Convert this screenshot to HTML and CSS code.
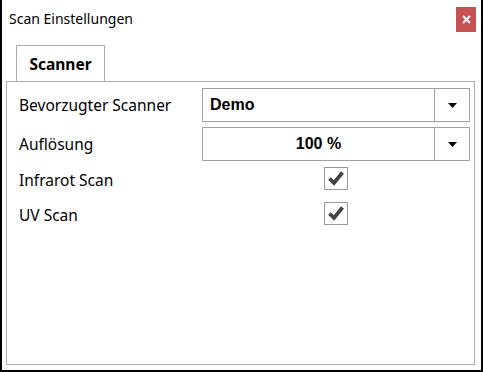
FILE: index.html
```html
<!DOCTYPE html>
<html lang="de">
<head>
    <meta charset="UTF-8">
    <title>Scan Einstellungen</title>
    <link rel="stylesheet" href="styles.css">
</head>
<body>
    <div class="window">
        <div class="titlebar">
            <span class="title">Scan Einstellungen</span>
            <div class="close-button">
                <svg width="9" height="9" viewBox="0 0 9 9">
                    <path d="M1 1 L8 8 M8 1 L1 8" stroke="#fff" stroke-width="2"/>
                </svg>
            </div>
        </div>

        <div class="tab-control">
            <div class="tab-strip">
                <div class="tab-item selected">Scanner</div>
            </div>
            <div class="tab-panel">
                <div class="setting-row combo-row">
                    <span class="setting-label">Bevorzugter Scanner</span>
                    <div class="combo-box">
                        <span class="combo-value">Demo</span>
                        <span class="combo-arrow">
                            <svg width="9" height="5" viewBox="0 0 9 5"><path d="M0 0 H9 L4.5 5 Z" fill="#000"/></svg>
                        </span>
                    </div>
                </div>
                <div class="setting-row combo-row">
                    <span class="setting-label">Auflösung</span>
                    <div class="combo-box">
                        <span class="combo-value centered">100 %</span>
                        <span class="combo-arrow">
                            <svg width="9" height="5" viewBox="0 0 9 5"><path d="M0 0 H9 L4.5 5 Z" fill="#000"/></svg>
                        </span>
                    </div>
                </div>
                <div class="setting-row check-row">
                    <span class="setting-label">Infrarot Scan</span>
                    <div class="check-cell">
                        <span class="check-box">
                            <svg width="22" height="22" viewBox="0 0 22 22"><path d="M4.5 11.5 L9 16 L17.5 5.5" fill="none" stroke="#444" stroke-width="3.8"/></svg>
                        </span>
                    </div>
                </div>
                <div class="setting-row check-row">
                    <span class="setting-label">UV Scan</span>
                    <div class="check-cell">
                        <span class="check-box">
                            <svg width="22" height="22" viewBox="0 0 22 22"><path d="M4.5 11.5 L9 16 L17.5 5.5" fill="none" stroke="#444" stroke-width="3.8"/></svg>
                        </span>
                    </div>
                </div>
            </div>
        </div>
    </div>
</body>
</html>
```

FILE: styles.css
```css
:root {
    --frame: #000;
    --tab-border: #acacac;
    --control-border: #a0a0a0;
    --close-red: #c75050;
}

body {
    margin: 0;
    font-family: "Noto Sans", "Open Sans", sans-serif;
    color: #000;
    background: #fff;
}

.window {
    box-sizing: border-box;
    width: 483px;
    height: 372px;
    display: flex;
    flex-direction: column;
    border: 2px solid var(--frame);
    border-top: none;
    background: #fff;
}

.titlebar {
    display: flex;
    align-items: center;
    justify-content: space-between;
    height: 25px;
    padding: 7px 5px 0 7px;
}

.title {
    font-size: 14px;
    margin-top: -3px;
}

.close-button {
    width: 20px;
    height: 25px;
    display: flex;
    align-items: center;
    justify-content: center;
    background-color: var(--close-red);
}

.tab-control {
    flex: 1;
    display: flex;
    flex-direction: column;
    margin: 13px 6px 5px 4px;
}

.tab-strip {
    display: flex;
    padding-left: 10px;
}

.tab-item {
    width: 87px;
    height: 35px;
    border: 1px solid var(--tab-border);
    border-bottom: none;
    display: flex;
    align-items: center;
    justify-content: center;
    font-size: 15.5px;
    font-weight: bold;
}

.tab-panel {
    flex: 1;
    border: 1px solid var(--tab-border);
    padding: 6px 4px 0 12px;
}

.setting-row {
    display: grid;
    grid-template-columns: 183px 1fr;
    align-items: center;
}

.combo-row {
    height: 34px;
    margin-bottom: 5px;
}

.check-row {
    height: 35px;
}

.combo-row + .check-row {
    margin-top: -4px;
}

.setting-label {
    font-size: 15.5px;
}

.combo-box {
    box-sizing: border-box;
    height: 34px;
    display: grid;
    grid-template-columns: 1fr 35px;
    border: 1px solid var(--control-border);
    font-family: "Liberation Sans", Arial, sans-serif;
    font-size: 16px;
    font-weight: bold;
}

.combo-value {
    display: flex;
    align-items: center;
    padding-left: 7px;
}

.combo-value.centered {
    justify-content: center;
    padding-left: 0;
}

.combo-arrow {
    display: flex;
    align-items: center;
    justify-content: center;
    border-left: 1px solid var(--control-border);
}

.check-cell {
    display: flex;
    justify-content: center;
}

.check-box {
    box-sizing: border-box;
    width: 24px;
    height: 23px;
    border: 1px solid #999;
    display: flex;
    align-items: center;
    justify-content: center;
    margin-top: -3px;
}
```
